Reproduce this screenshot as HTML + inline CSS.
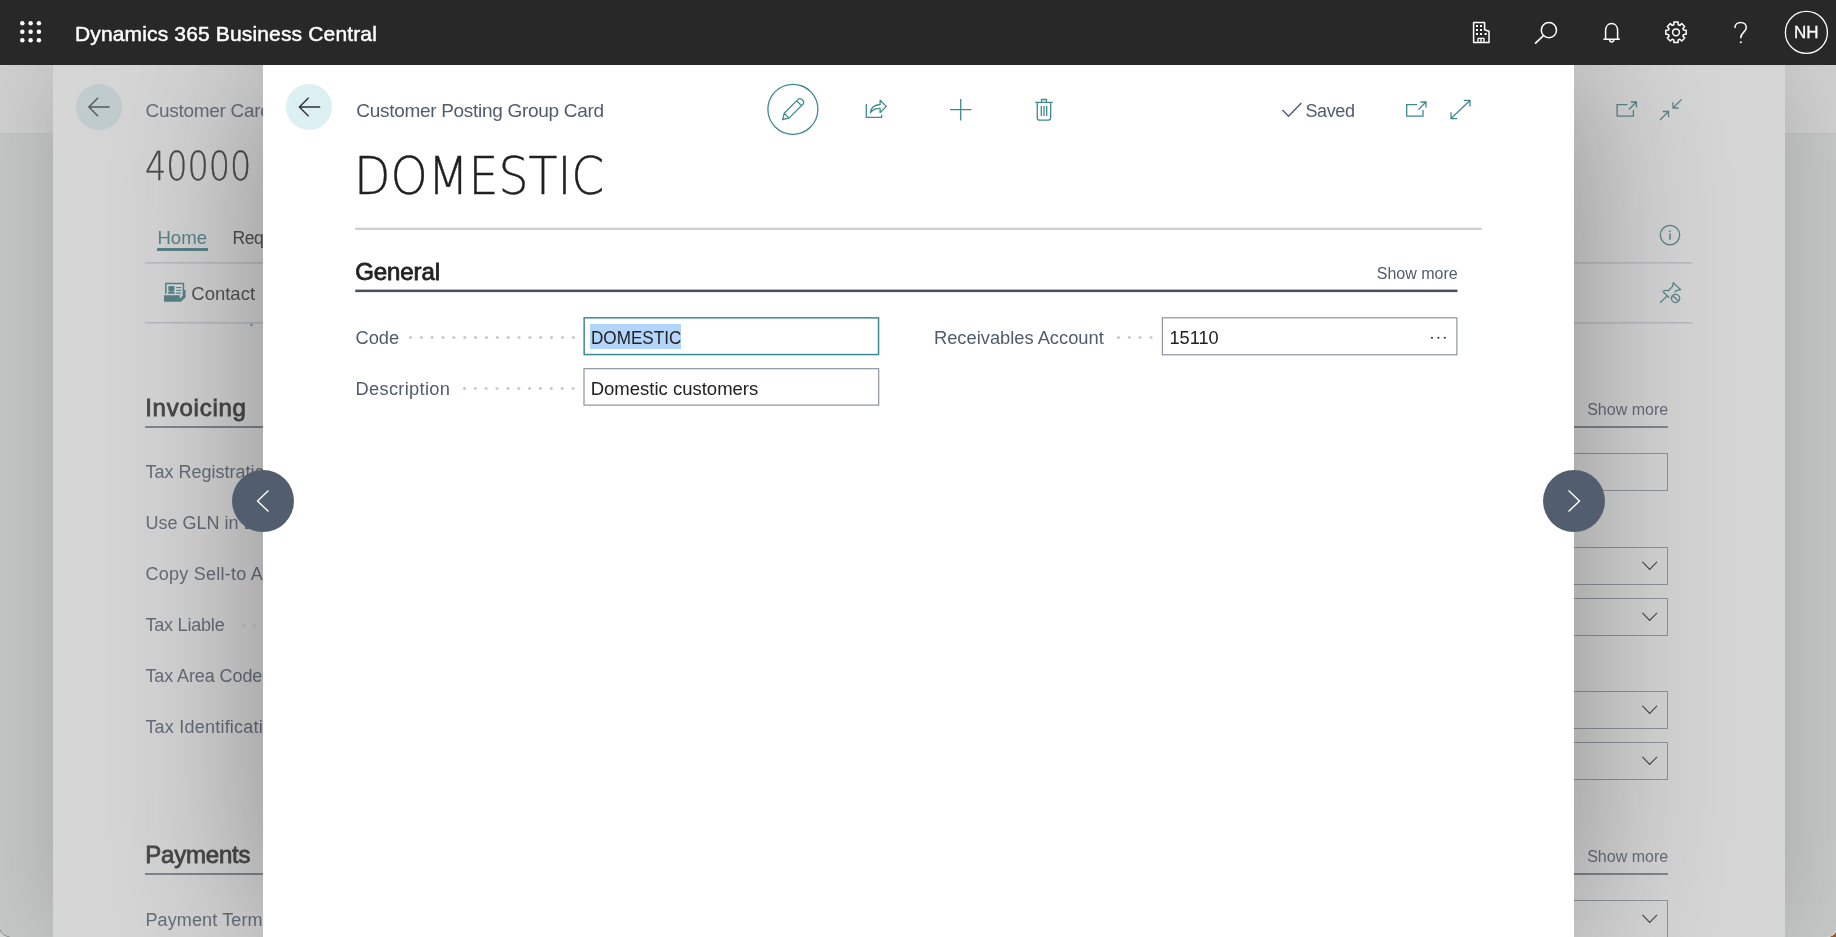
<!DOCTYPE html>
<html lang="en">
<head>
<meta charset="utf-8">
<title>Customer Posting Group Card - Dynamics 365 Business Central</title>
<style>
*{box-sizing:border-box;margin:0;padding:0}
html,body{width:1836px;height:937px;overflow:hidden;background:#c5c7c7;font-family:"Liberation Sans",sans-serif;color:#212121}
.abs,.abs *{position:absolute}
.t{white-space:pre;line-height:1}
#hdr,#card,#modal{will-change:transform}
svg{overflow:visible}
#hdr{left:0;top:0;width:1836px;height:65px;background:#282828;z-index:50}
#base{left:0;top:65px;width:1836px;height:872px;background:#c7c9c8;z-index:1;overflow:hidden}
#basetop{left:0;top:0;width:1836px;height:69px;background:#d1d1d1;border-bottom:1px solid #c4c4c4}
#card{left:53px;top:65px;width:1732px;height:872px;background:#d6d6d6;z-index:2;box-shadow:0 0 90px rgba(0,0,0,.18)}
#cardin{left:0;top:0;width:1731px;height:872px;overflow:hidden}
#modal{left:263px;top:65px;width:1311px;height:872px;background:#fff;z-index:10;box-shadow:0 0 150px rgba(0,0,0,.36)}
.lbl{color:#505c6d}
.inp{background:#fff;border:1px solid #8f95a0}
.nav{width:62px;height:62px;border-radius:50%;background:#525d6d;z-index:20}
.dots{height:3px;background-repeat:repeat-x}
</style>
</head>
<body>
<div id="hdr" class="abs">
  <svg style="left:20px;top:21px" width="22" height="22" viewBox="0 0 22 22" fill="#fff">
    <circle cx="2.3" cy="2.3" r="2.25"/><circle cx="10.6" cy="2.3" r="2.25"/><circle cx="18.9" cy="2.3" r="2.25"/>
    <circle cx="2.3" cy="10.8" r="2.25"/><circle cx="10.6" cy="10.8" r="2.25"/><circle cx="18.9" cy="10.8" r="2.25"/>
    <circle cx="2.3" cy="19.2" r="2.25"/><circle cx="10.6" cy="19.2" r="2.25"/><circle cx="18.9" cy="19.2" r="2.25"/>
  </svg>
  <div class="t" style="left:75px;top:22.6px;font-size:21px;color:#fff;-webkit-text-stroke:.45px #fff;letter-spacing:.15px">Dynamics 365 Business Central</div>
  <svg style="left:0;top:0" width="1836" height="65" viewBox="0 0 1836 65" fill="none" stroke="#fff" stroke-width="1.5" stroke-linejoin="round">
    <path d="M1473.6 42.4V22.5h11v7.2l4.4 1.6v11.1z"/>
    <path d="M1478 42.4v-4h6v4M1481 38.4v4" stroke-width="1.3"/>
    <g fill="#fff" stroke="none"><rect x="1476" y="25" width="2" height="2"/><rect x="1480" y="25" width="2" height="2"/><rect x="1476" y="29" width="2" height="2"/><rect x="1480" y="29" width="2" height="2"/><rect x="1476" y="33" width="2" height="2"/><rect x="1480" y="33" width="2" height="2"/><rect x="1484.6" y="33" width="2" height="2"/></g>
    <circle cx="1548.9" cy="30.2" r="7.6"/><path d="M1543.4 35.6l-7.8 7.6" stroke-linecap="round" stroke-width="1.7"/>
    <path d="M1603.4 39.3h16.4M1605.6 39.3v-8.6c0-4.5 2.7-7.2 6-7.2s6 2.7 6 7.2v8.6M1609.6 39.8a2.1 2.1 0 0 0 4.200 0"/>
    <path d="M1673.82 24.71 L1673.93 22.11 L1678.07 22.11 L1678.18 24.71 L1679.82 25.39 L1681.75 23.63 L1684.67 26.55 L1682.91 28.48 L1683.59 30.12 L1686.19 30.23 L1686.19 34.37 L1683.59 34.48 L1682.91 36.12 L1684.67 38.05 L1681.75 40.97 L1679.82 39.21 L1678.18 39.89 L1678.07 42.49 L1673.93 42.49 L1673.82 39.89 L1672.18 39.21 L1670.25 40.97 L1667.33 38.05 L1669.09 36.12 L1668.41 34.48 L1665.81 34.37 L1665.81 30.23 L1668.41 30.12 L1669.09 28.48 L1667.33 26.55 L1670.25 23.63 L1672.18 25.39Z"/>
    <circle cx="1676" cy="32.3" r="3.4"/>
    <path d="M1735 27.6c0-3.200 2.500-5.200 5.700-5.200s5.600 2.200 5.600 5.100c0 4.600-5.500 4.800-5.500 10.300" stroke-linecap="round"/><circle cx="1740.800" cy="42.200" r="1" fill="#fff" stroke="none"/>
    <circle cx="1806.4" cy="32.4" r="21" stroke-width="1.3"/>
  </svg>
  <div class="t" style="left:1794px;top:24.4px;font-size:17px;color:#fff;-webkit-text-stroke:.3px #fff">NH</div>
</div>
<div id="base" class="abs"><div id="basetop"></div></div>
<div id="card" class="abs"><div id="cardin">
<div style="left:22.8px;top:18.7px;width:46.2px;height:46.2px;border-radius:50%;background:#c1cccf"></div>
<svg style="left:0;top:0" width="1731" height="872" viewBox="53 65 1731 872" fill="none" stroke="#59848a" stroke-width="1.3"><path d="M109.700 107H89.100M98.100 97.800L88.900 107l9.200 9.200" stroke="#585858" stroke-width="1.400"/><path d="M166.300 284h16.600v12l-3.100 3v-3.800h-13.500z" fill="#dadbe0" stroke="none"/><g stroke="none" fill="#59848a"><path d="M165.100 282.800h19.100v7.200h1.400v7.300l-4.700 4.400h-16.900v-6.500h15.800v3.500l2.900-2.900v-11.500h-16.100v9.400h-1.500z"/><rect x="168.300" y="286" width="6.200" height="5" rx="1.200"/><path d="M167.900 293.700v-1.100l1.600-1.400h3.800l1.600 1.400v1.100z"/><rect x="176.100" y="287" width="5.200" height="1.100"/><rect x="176.100" y="289.800" width="5.200" height="1.100"/><rect x="176.100" y="292.500" width="5.200" height="1.200"/></g><rect x="250.500" y="323.600" width="1.800" height="2.200" fill="#59848a" stroke="none"/><path d="M1627.400 104.700h-10.300v11.400h16.300v-6.100M1628.900 109.500l7.500-7.500M1630.900 102h5.500v5.500"/><path d="M1681.500 99.500l-8.500 8.500M1673 102.300v5.700h5.700M1660 120l8.500-8.500M1662.800 111.500h5.700v5.700"/><circle cx="1670" cy="235.100" r="9.700"/><path d="M1670 233.600v6.200M1670 230.400v1.600" stroke-width="1.500"/><path d="M1660.100 302.800L1667 296.100M1662.900 291.600L1669.200 297.800M1662.900 291.600C1664.500 290.300 1666.500 290.300 1668.300 290.700L1672.400 286.600L1673.300 282.700L1680.600 289.600L1676.100 290.700L1674.500 292.400" stroke-linejoin="round"/><circle cx="1675.600" cy="298.400" r="4.100"/><path d="M1672.600 295.700l6 5.400"/></svg>
<div class="t" style="left:92.6px;top:35.52px;font-size:19px;color:#666e7a;letter-spacing:-0.3px;">Customer Card</div>
<div class="t" style="left:91.6px;top:82.23px;font-family:'DejaVu Sans',sans-serif;font-weight:200;font-size:39.600px;transform:scaleX(.845);transform-origin:0 0;color:#4a4a4a;-webkit-text-stroke:.3px #4a4a4a">40000</div>
<div class="t" style="left:104.4px;top:163.66px;font-size:18.6px;color:#59848a;">Home</div>
<div style="left:104px;top:183.2px;width:50.800px;height:2.800px;background:#59848a"></div>
<div class="t" style="left:179.6px;top:164.50px;font-size:17.6px;color:#505050;letter-spacing:-0.5px;">Requests</div>
<svg style="left:92px;top:195.5px" width="1547.5" height="4" viewBox="0 0 1547.5 4"><rect x="0" y="1" width="1547.5" height="1.600" fill="#bbbcc1"/></svg>
<svg style="left:92px;top:256.3px" width="1547.5" height="4" viewBox="0 0 1547.5 4"><rect x="0" y="1" width="1547.5" height="1.600" fill="#bbbcc1"/></svg>
<div class="t" style="left:138.3px;top:220.14px;font-size:18.5px;color:#545454;">Contact</div>
<div class="t" style="left:92.2px;top:330.68px;font-size:24px;color:#484848;font-weight:400;letter-spacing:0.75px;-webkit-text-stroke:.8px #484848;">Invoicing</div>
<div style="left:92px;top:361px;width:1523px;height:2px;background:#80868f"></div>
<div class="t" style="left:1534.2px;top:336.66px;font-size:16px;color:#666e7a;">Show more</div>
<div class="t" style="left:92.4px;top:398.46px;font-size:18px;color:#666e7a;letter-spacing:0px;">Tax Registration No.</div>
<div class="t" style="left:92.4px;top:449.46px;font-size:18px;color:#666e7a;letter-spacing:0px;">Use GLN in Electronic Document</div>
<div class="t" style="left:92.4px;top:500.46px;font-size:18px;color:#666e7a;letter-spacing:0.25px;">Copy Sell-to Addr. to Qte From</div>
<div class="t" style="left:92.4px;top:551.46px;font-size:18px;color:#666e7a;letter-spacing:-0.2px;">Tax Liable</div>
<div class="t" style="left:92.4px;top:602.46px;font-size:18px;color:#666e7a;letter-spacing:-0.09px;">Tax Area Code</div>
<div class="t" style="left:92.4px;top:653.46px;font-size:18px;color:#666e7a;letter-spacing:0.22px;">Tax Identification Type</div>
<div style="left:1319px;top:388px;width:296px;height:38px;border:1px solid #8f949c"></div>
<div style="left:1319px;top:482px;width:296px;height:38px;border:1px solid #8f949c"></div>
<svg style="left:1589px;top:496.0px" width="16" height="10" viewBox="0 0 16 10" fill="none" stroke="#4a4a4a" stroke-width="1.200"><path d="M0.400 0.800l7.300 7.600 7.300-7.600"/></svg>
<div style="left:1319px;top:533px;width:296px;height:38px;border:1px solid #8f949c"></div>
<svg style="left:1589px;top:547.0px" width="16" height="10" viewBox="0 0 16 10" fill="none" stroke="#4a4a4a" stroke-width="1.200"><path d="M0.400 0.800l7.300 7.600 7.300-7.600"/></svg>
<div style="left:1319px;top:626.4px;width:296px;height:38.0px;border:1px solid #8f949c"></div>
<svg style="left:1589px;top:640.4px" width="16" height="10" viewBox="0 0 16 10" fill="none" stroke="#4a4a4a" stroke-width="1.200"><path d="M0.400 0.800l7.300 7.600 7.300-7.600"/></svg>
<div style="left:1319px;top:677.4px;width:296px;height:38.0px;border:1px solid #8f949c"></div>
<svg style="left:1589px;top:691.4px" width="16" height="10" viewBox="0 0 16 10" fill="none" stroke="#4a4a4a" stroke-width="1.200"><path d="M0.400 0.800l7.300 7.600 7.300-7.600"/></svg>
<div class="dots" style="left:184.59px;top:558.80px;width:21.74px;background-image:radial-gradient(circle at center,#bfc3ca 1.05px,transparent 1.6px);background-size:10.87px 3px"></div>
<div class="t" style="left:92.2px;top:778.08px;font-size:24px;color:#484848;font-weight:400;letter-spacing:-0.2px;-webkit-text-stroke:.8px #484848;">Payments</div>
<div style="left:92px;top:808.4px;width:1523px;height:2px;background:#80868f"></div>
<div class="t" style="left:1534.2px;top:784.06px;font-size:16px;color:#666e7a;">Show more</div>
<div class="t" style="left:92.4px;top:845.86px;font-size:18px;color:#666e7a;letter-spacing:0.13px;">Payment Terms Code</div>
<div style="left:1319px;top:835.4px;width:296px;height:38px;border:1px solid #8f949c"></div>
<svg style="left:1589px;top:849.4px" width="16" height="10" viewBox="0 0 16 10" fill="none" stroke="#4a4a4a" stroke-width="1.200"><path d="M0.400 0.800l7.300 7.600 7.300-7.600"/></svg>
</div></div>
<div id="modal" class="abs">
<div style="left:23.3px;top:18.7px;width:46.2px;height:46.2px;border-radius:50%;background:#dceff1"></div>
<svg style="left:0;top:0" width="1311" height="872" viewBox="263 65 1311 872" fill="none" stroke="#3e8a91" stroke-width="1.3"><path d="M320.2 107H299.6M308.6 97.800L299.400 107l9.200 9.200" stroke="#333" stroke-width="1.400"/><circle cx="792.9" cy="109.3" r="25" stroke-width="1.3"/><path d="M782.6 119.7l1.600-6.400 13.900-13.900a2.600 2.600 0 0 1 3.700 0l1.100 1.100a2.600 2.600 0 0 1 0 3.700l-13.900 13.900zM784.200 113.300l4.800 4.800M796.700 100.800l4.800 4.800" stroke-linejoin="round"/><path d="M866.3 104v13.400h15.300v-2.600"/><path d="M870.4 112.600c0.600-4.600 3.900-7.800 9.700-8.100v-4.300l6.200 6.200-6.200 6.200v-4.200c-4.400-0.200-7.400 1.300-9.700 4.200z" stroke-linejoin="round"/><path d="M950 109.700h21.400M960.700 99v21.400"/><path d="M1035.2 102.3h17.6M1041.5 102v-2.5h4.9v2.5M1037.25 102.5v15.3a2.3 2.3 0 0 0 2.3 2.3h8.800a2.3 2.3 0 0 0 2.3-2.3v-15.3M1041.3 106v10M1044 106v10M1046.7 106v10"/><path d="M1282.500 110l6 6.300 12.900-13.300" stroke="#505c6d" stroke-width="1.400"/><path d="M1417 104.700h-10.300v11.400h16.300v-6.100M1418.500 109.500l7.500-7.500M1420.500 102h5.500v5.500"/><path d="M1451.300 118.300l18.400-17.600M1463.700 100.300h6.300v6.300M1451 112.300v6.300h6.300"/></svg>
<div class="t" style="left:93.3px;top:35.52px;font-size:19px;color:#505c6d;letter-spacing:-0.3px;">Customer Posting Group Card</div>
<div class="t" style="left:90.8px;top:84.98px;font-family:'DejaVu Sans',sans-serif;font-weight:200;font-size:52.3px;transform:scaleX(.905);transform-origin:0 0;color:#212121;-webkit-text-stroke:.35px #212121">DOMESTIC</div>
<div class="t" style="left:1042.5px;top:36.56px;font-size:18px;color:#505c6d;letter-spacing:-0.4px;">Saved</div>
<svg style="left:0;top:0" width="1311" height="872" viewBox="263 65 1311 872" stroke="none"><rect x="355.2" y="227.6" width="1126.6" height="2.4" fill="#d0d1d7"/><rect x="355.2" y="289.6" width="1102.3" height="2.5" fill="#465061"/></svg>
<div class="t" style="left:92.3px;top:194.98px;font-size:24px;color:#212121;font-weight:400;letter-spacing:-0.1px;-webkit-text-stroke:.8px #212121;">General</div>
<div class="t" style="left:1113.8px;top:201.16px;font-size:16px;color:#505c6d;">Show more</div>
<div class="t" style="left:92.5px;top:263.81px;font-size:18.3px;color:#505c6d;">Code</div>
<div class="dots" style="left:141.82px;top:271.10px;width:173.92px;background-image:radial-gradient(circle at center,#bfc3ca 1.05px,transparent 1.6px);background-size:10.87px 3px"></div>
<svg style="left:0;top:0" width="1311" height="872" viewBox="263 65 1311 872" fill="#fff" stroke="#3e8a91" stroke-width="1.5"><rect x="584.15" y="317.85" width="294.4" height="36.7"/></svg>
<div style="left:327px;top:259px;width:91px;height:25px;background:#b4d5fb"></div>
<div class="t" style="left:327.6px;top:263.22px;font-size:19px;color:#212121;transform:scaleX(.9);transform-origin:0 0;">DOMESTIC</div>
<div class="t" style="left:92.5px;top:314.71px;font-size:18.3px;color:#505c6d;letter-spacing:0.3px;">Description</div>
<div class="dots" style="left:196.17px;top:322.00px;width:119.57px;background-image:radial-gradient(circle at center,#bfc3ca 1.05px,transparent 1.6px);background-size:10.87px 3px"></div>
<svg style="left:0;top:0" width="1311" height="872" viewBox="263 65 1311 872" fill="#fff" stroke="#8d939e" stroke-width="1.2"><rect x="584" y="368.7" width="294.7" height="36.4"/><rect x="1162.4" y="317.8" width="294.5" height="37"/></svg>
<div class="t" style="left:327.7px;top:314.54px;font-size:18.5px;color:#212121;">Domestic customers</div>
<div class="t" style="left:671px;top:263.81px;font-size:18.3px;color:#505c6d;">Receivables Account</div>
<div class="dots" style="left:850.15px;top:271.10px;width:43.48px;background-image:radial-gradient(circle at center,#bfc3ca 1.05px,transparent 1.6px);background-size:10.87px 3px"></div>
<div class="t" style="left:906.5px;top:263.89px;font-size:18.2px;color:#212121;">15110</div>
<svg style="left:1167px;top:271px" width="18" height="4" viewBox="0 0 18 4" fill="#333"><circle cx="2" cy="1.700" r="1.050"/><circle cx="8.400" cy="1.700" r="1.050"/><circle cx="14.800" cy="1.700" r="1.050"/></svg>
</div>
<div class="abs nav" style="left:232px;top:470px"><svg style="left:0;top:0" width="62" height="62" viewBox="0 0 62 62" fill="none" stroke="#fff" stroke-width="1.400"><path d="M36.500 20.500L25.500 31l11 10.500"/></svg></div>
<div class="abs nav" style="left:1543px;top:470px"><svg style="left:0;top:0" width="62" height="62" viewBox="0 0 62 62" fill="none" stroke="#fff" stroke-width="1.400"><path d="M25.500 20.500L36.500 31l-11 10.500"/></svg></div>
<svg class="abs" style="position:absolute;left:0;top:917px;z-index:60" width="1836" height="20" viewBox="0 917 1836 20">
  <path d="M0 929.600Q1.500 935.500 9.800 937L0 937Z" fill="#d3d3d3"/>
  <path d="M0 929.600Q1.500 935.500 9.800 937" fill="none" stroke="#8c8c8c" stroke-width="1"/>
  <path d="M1827.800 937Q1834.200 936.200 1836 931.500L1836 937Z" fill="#9f5127"/>
  <path d="M1827.300 937Q1834 936 1836 931" fill="none" stroke="#dfe3e6" stroke-width=".8"/>
</svg>
</body>
</html>
